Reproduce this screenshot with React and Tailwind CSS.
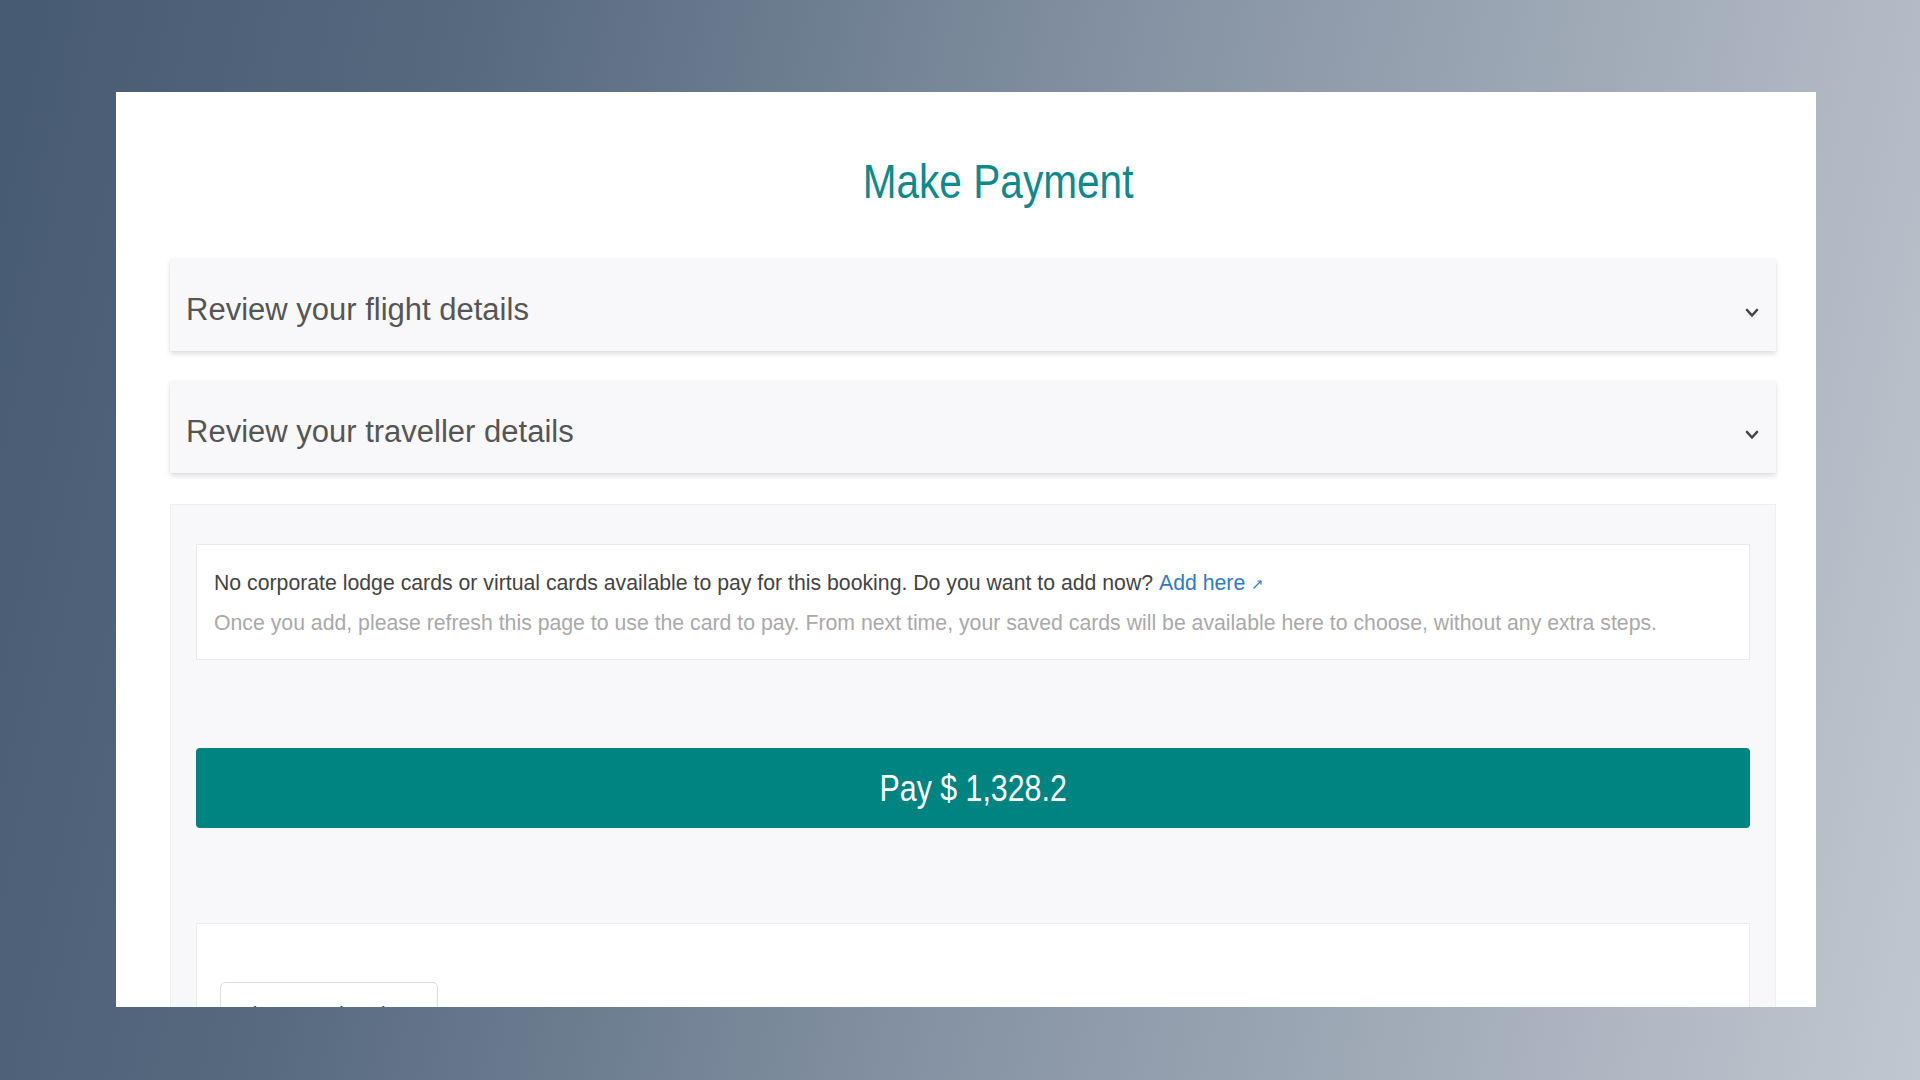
import React from "react";

function Chevron() {
  return (
    <svg width="14" height="10" viewBox="0 0 14 10" className="block">
      <polyline points="2,2 7,7.5 12,2" fill="none" stroke="#454545" strokeWidth="2.6" strokeLinecap="round" strokeLinejoin="round" />
    </svg>
  );
}

function Accordion({ title }) {
  return (
    <div className="h-[92px] bg-[#f8f8fa] shadow-[0_3px_5px_rgba(0,0,0,0.13),0_0_2px_rgba(0,0,0,0.04)] flex items-center justify-between pl-[16px] pr-[17px]">
      <span className="mt-[8px] text-[31px] leading-none text-[#555555] [font-family:'Liberation_Sans',Arial,sans-serif]">{title}</span>
      <span className="mt-[16px]"><Chevron /></span>
    </div>
  );
}

export default function App() {
  return (
    <div className="w-full h-[1080px] overflow-hidden bg-[linear-gradient(102deg,#465a72_0%,#56697f_22%,#8794a4_55%,#c0c7d0_100%)] pt-[92px] pl-[116px]">
      <div className="w-[1700px] h-[915px] bg-white overflow-hidden pl-[54px] pr-[40px] [font-family:'Liberation_Sans',Arial,sans-serif]">
        <h1 className="mt-[66px] h-[48px] leading-[48px] text-center pl-[50px] text-[48px] text-[#0e8a8c] font-normal">
          <span className="inline-block scale-x-[0.846]">Make Payment</span>
        </h1>
        <div className="mt-[53px] flex flex-col gap-[30px]">
          <Accordion title="Review your flight details" />
          <Accordion title="Review your traveller details" />
        </div>
        <div className="mt-[31px] h-[600px] bg-[#f8f8fa] border border-[#eeeef0] px-[25px] pt-[39px]">
          <div className="bg-white border border-[#e9e9ec] pl-[17px] pr-[16px] pt-[23px] pb-[21px] text-[21.25px] leading-[30px]">
            <p className="text-[#444444] whitespace-nowrap">
              No corporate lodge cards or virtual cards available to pay for this booking. Do you want to add now?{" "}
              <a className="text-[#2f7cc2] inline-flex items-center gap-[7px]">
                Add here
                <svg width="11" height="11" viewBox="0 0 11 11" className="inline-block mt-[2px]">
                  <path d="M1.5 9.5 L9 2" stroke="#2f7cc2" strokeWidth="1.2" fill="none" />
                  <path d="M5.5 2 L9 2 L9 5.5" stroke="#2f7cc2" strokeWidth="1.2" fill="none" />
                </svg>
              </a>
            </p>
            <p className="mt-[10px] text-[#a9a9a9] whitespace-nowrap">
              Once you add, please refresh this page to use the card to pay. From next time, your saved cards will be available here to choose, without any extra steps.
            </p>
          </div>
          <button className="mt-[88px] w-full h-[80px] rounded-[4px] bg-[#008482] text-white text-[37px] leading-none flex items-center justify-center">
            <span className="inline-block scale-x-[0.82]">Pay $ 1,328.2</span>
          </button>
          <div className="mt-[95px] h-[300px] bg-white border border-[#ececef] pl-[23px] pt-[58px]">
            <button className="w-[218px] h-[52px] border border-[#dddddd] rounded-[5px] bg-white text-left pl-[18px] pt-[16px] text-[21px] leading-[30px] text-[#444444] flex items-start">
              View Fare breakup
            </button>
          </div>
        </div>
      </div>
    </div>
  );
}
